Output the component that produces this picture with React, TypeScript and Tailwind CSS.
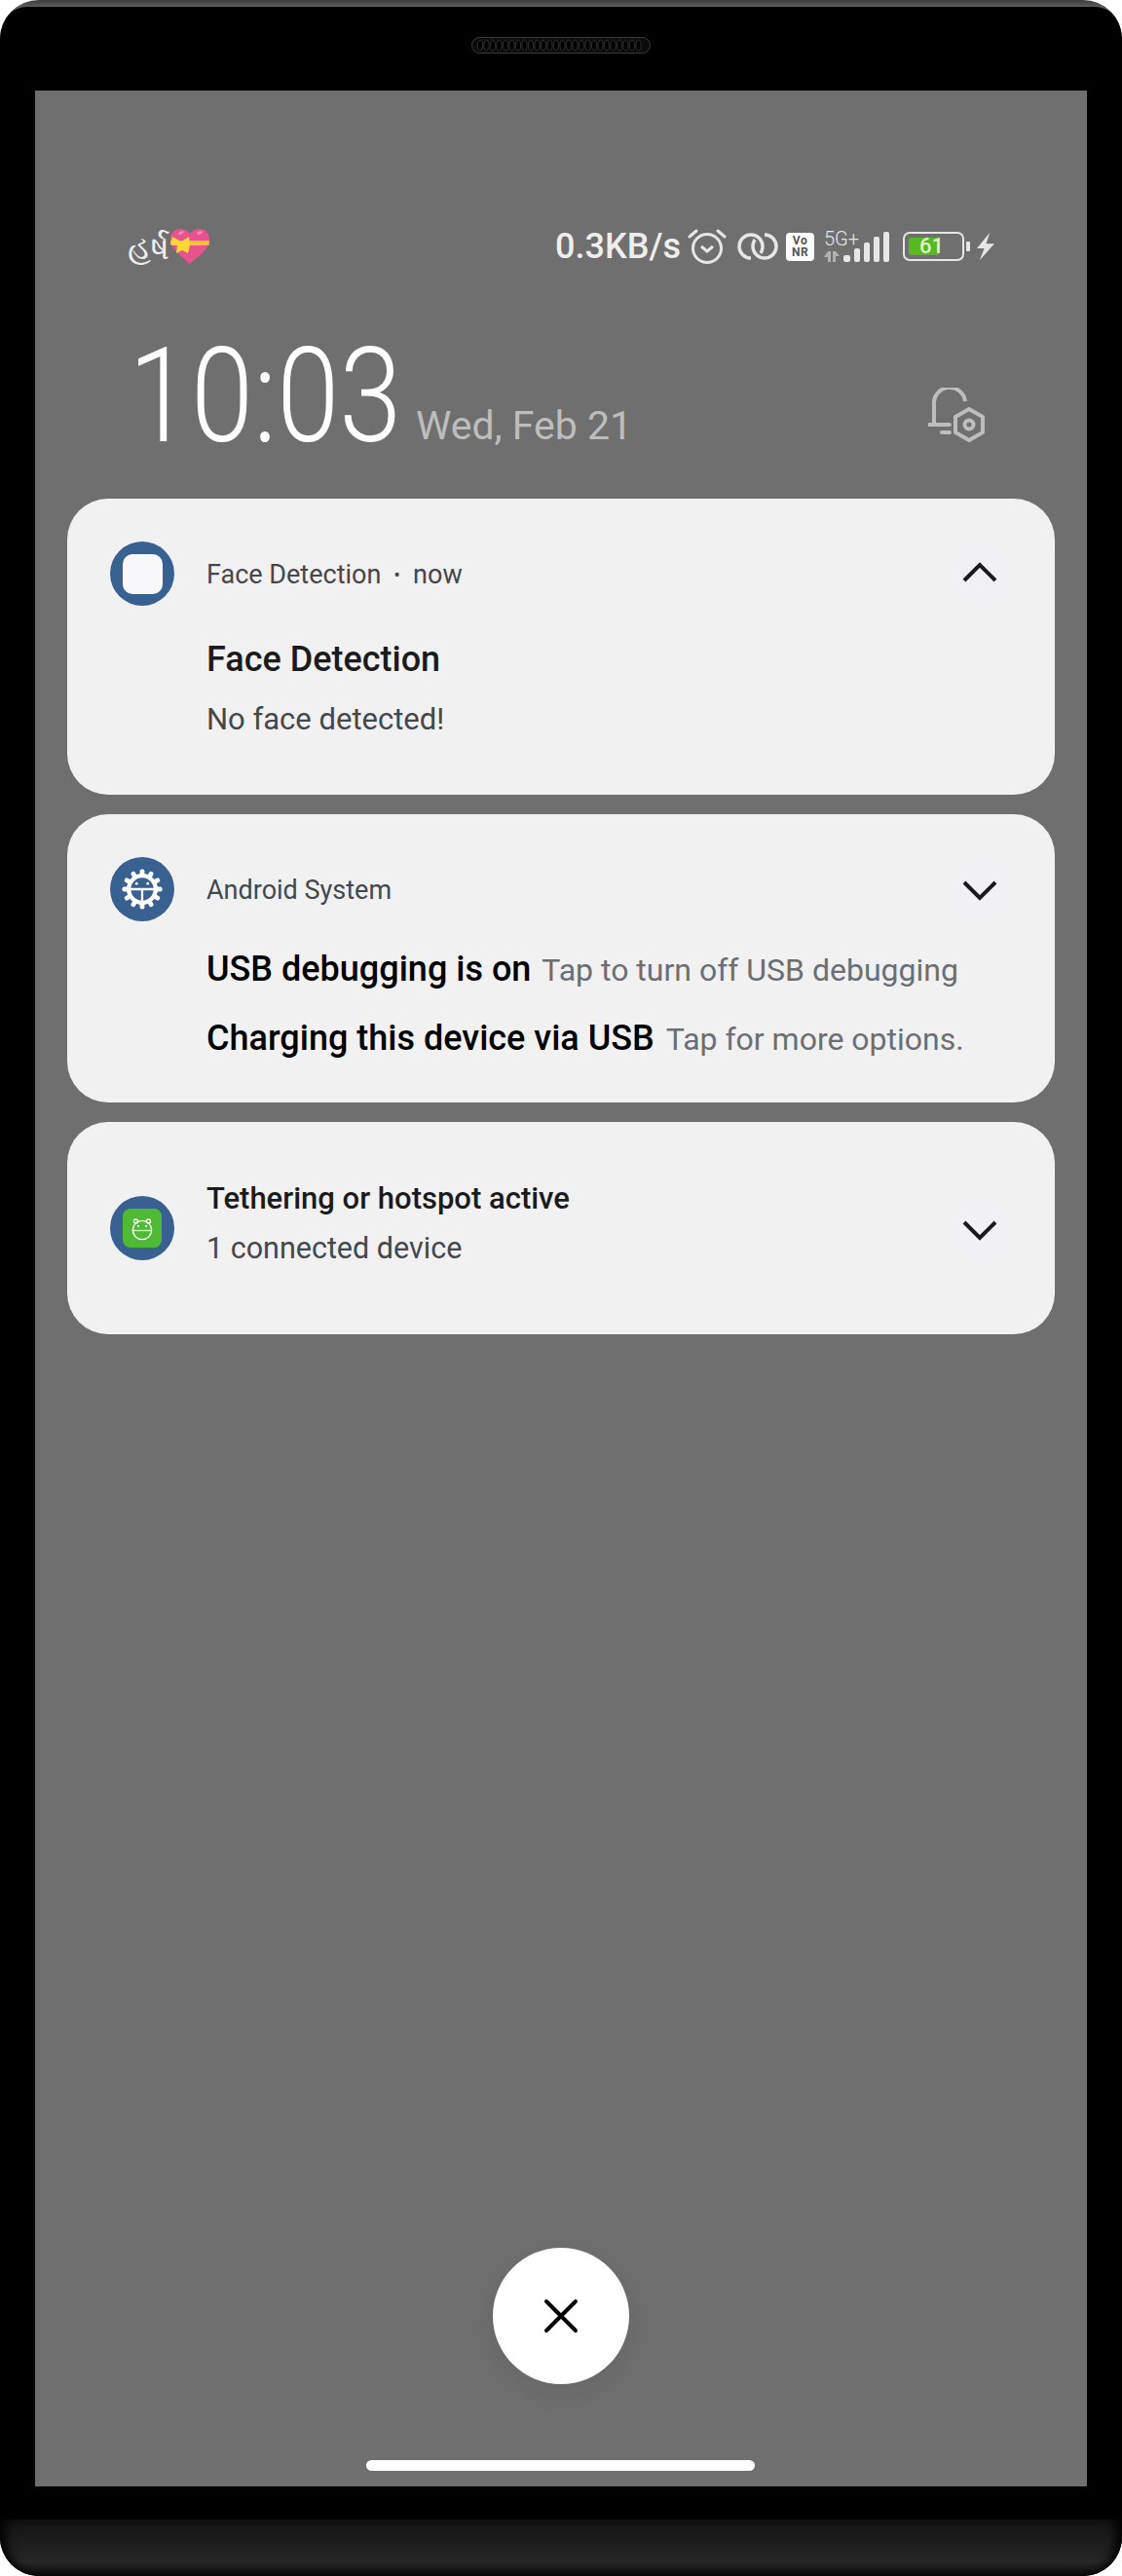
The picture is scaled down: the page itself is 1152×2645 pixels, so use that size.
const font = "font-['Roboto','Liberation_Sans',sans-serif]";

function Chevron({ up }: { up?: boolean }) {
  return (
    <div className="-my-[20px] flex h-[63px] w-[63px] shrink-0 items-center justify-center rounded-full bg-[#f0f0f5]">
      <svg width="40" height="24" viewBox="0 0 40 24" fill="none" stroke="#1b1b1d" strokeWidth="4">
        <path d={up ? "M4 19 L20 3 L36 19" : "M4 5 L20 21 L36 5"} />
      </svg>
    </div>
  );
}

function Speaker() {
  return (
    <svg width="184" height="17" viewBox="0 0 184 17">
      <rect x="0.5" y="0.5" width="183" height="16" rx="8" fill="#0c0c0c" stroke="#3c3c3c" />
      {Array.from({ length: 26 }).map((_, i) => (
        <ellipse key={i} cx={9 + i * 6.5} cy="8.5" rx="2.6" ry="5.5" fill="#000" stroke="#3a3a3a" strokeWidth="0.8" />
      ))}
    </svg>
  );
}

function AppIcon({ children }: { children: React.ReactNode }) {
  return (
    <div className="flex h-[66px] w-[66px] shrink-0 items-center justify-center rounded-full bg-[#386090]">{children}</div>
  );
}

function Gear() {
  const teeth = Array.from({ length: 12 }).map((_, i) => i * 30);
  return (
    <svg width="42" height="42" viewBox="0 0 44 44">
      {teeth.map((a) => (
        <rect key={a} x="19.5" y="0.5" width="5" height="8" rx="2" fill="#fff" transform={`rotate(${a} 22 22)`} />
      ))}
      <circle cx="22" cy="22" r="14.5" fill="#386090" stroke="#fff" strokeWidth="4.5" />
      <path d="M8 22 H36 M22 22 V36" stroke="#fff" strokeWidth="2.4" />
      <circle cx="16" cy="16" r="1.5" fill="#fff" />
      <circle cx="28" cy="16" r="1.5" fill="#fff" />
    </svg>
  );
}

function Robot() {
  return (
    <svg width="24" height="26" viewBox="0 0 24 26" fill="none" stroke="#fff" strokeWidth="1.3">
      <circle cx="12" cy="15" r="9.7" />
      <path d="M2.4 15.5 H21.6" />
      <circle cx="5.5" cy="6" r="2" />
      <circle cx="18.5" cy="6" r="2" />
      <circle cx="8" cy="11" r="1" fill="#fff" stroke="none" />
      <circle cx="16" cy="11" r="1" fill="#fff" stroke="none" />
    </svg>
  );
}

function Heart() {
  return (
    <svg width="42" height="38" viewBox="0 0 42 38">
      <path d="M21 37 C12 29 1 22 1 11 C1 5 6 1 11 1 C15 1 19 3 21 6 C23 3 27 1 31 1 C36 1 41 5 41 11 C41 22 30 29 21 37 Z" fill="#e8528f" />
      <path d="M1 13 H41 L40.5 18 H2 Z" fill="#fbc02d" />
      <path d="M12 14 L3 9 L1 17 L8 18 L7 26 L13 23 L19 26 L21 18 L20 9 Z" fill="#fdd835" />
      <ellipse cx="12" cy="5" rx="3" ry="1.5" fill="#f48fb1" transform="rotate(-30 12 5)" />
      <ellipse cx="31" cy="5" rx="3" ry="1.5" fill="#f48fb1" transform="rotate(-20 31 5)" />
    </svg>
  );
}

function StatusIcons() {
  return (
    <div className="flex items-center">
      <svg width="40" height="36" viewBox="0 0 40 36" fill="none" stroke="#e6e6e6" strokeWidth="3" className="ml-[7px]">
        <circle cx="20" cy="20" r="14.5" />
        <path d="M14 18 L20 23 L26 18" />
        <path d="M2 8 L9 2 M38 8 L31 2" strokeLinecap="round" />
      </svg>
      <svg width="42" height="30" viewBox="0 0 42 30" fill="none" stroke="#e6e6e6" strokeWidth="3.5" className="ml-[11px]">
        <path d="M14 27 A12 12 0 1 1 26 15 Q26 19 24 22" />
        <path d="M28 3 A12 12 0 1 1 16 15 Q16 11 18 8" />
      </svg>
      <div className="ml-[8px] flex h-[29px] w-[29px] flex-col items-center justify-center rounded-[4px] bg-white font-['Roboto',sans-serif] text-[12px] font-bold leading-[12px] tracking-[0.5px] text-[#555]">
        <span>Vo</span>
        <span>NR</span>
      </div>
      <div className="ml-[10px] flex h-[32px] w-[35px] flex-col justify-between">
        <span className="font-['Roboto',sans-serif] text-[20px] font-light leading-[17px] text-[#e6e6e6]">5G+</span>
        <svg width="16" height="11" viewBox="0 0 16 11" fill="#b0b0b0">
          <path d="M4 0 H7 V11 H4 V6 H0 Z M9 0 H12 L16 5 H12 V11 H9 Z" />
        </svg>
      </div>
      <svg width="47" height="31" viewBox="0 0 47 31" fill="#e6e6e6" className="-ml-[15px]">
        <rect x="0" y="24" width="7" height="7" rx="2" />
        <rect x="11" y="17" width="6" height="14" rx="2" />
        <rect x="21" y="11" width="6" height="20" rx="2" />
        <rect x="31" y="5" width="6" height="26" rx="2" />
        <rect x="41" y="0" width="6" height="31" rx="2" />
      </svg>
      <div className="relative ml-[14px] h-[30px] w-[63px] rounded-[7px] border-[2.5px] border-[#e6e6e6] p-[4px]">
        <div className="h-full w-[31px] rounded-[2px] bg-[#58b81f]" />
        <span className="absolute left-[15px] top-[-1px] font-['Roboto',sans-serif] text-[22px] font-medium leading-[28px] text-[#ddf5cc]">61</span>
      </div>
      <div className="ml-[2px] h-[10px] w-[4px] rounded-[1px] bg-[#e6e6e6]" />
      <svg width="19" height="30" viewBox="0 0 20 30" fill="#e6e6e6" className="ml-[7px]">
        <path d="M14 0 L0 17 H8 L3 30 L19 12 H10 Z" />
      </svg>
    </div>
  );
}

function BellHex() {
  return (
    <svg width="60" height="56" viewBox="0 0 60 56" fill="none" stroke="#bdbdbd" strokeWidth="4" className="mb-[5px]">
      <path d="M6 38 V18 A16 16 0 0 1 38 14" />
      <path d="M0 38 H22 M14 46 H22" strokeLinecap="round" />
      <path d="M42 22 L56 30 V46 L42 54 L28 46 V30 Z" strokeLinejoin="round" />
      <circle cx="42" cy="38" r="4.5" />
    </svg>
  );
}

export default function App() {
  return (
    <div className={`flex h-[2645px] w-[1152px] flex-col overflow-hidden rounded-[40px] bg-[linear-gradient(180deg,#3c3c3c_0,#5c5c5c_7px,#333_20px,#000_44px)] ${font}`}>
      <div className="mt-[7px] flex h-[86px] shrink-0 items-start justify-center rounded-t-[28px] bg-black pt-[31px]">
        <Speaker />
      </div>
      <div className="flex flex-1 flex-col bg-black">
        <div className="mx-[36px] flex h-[2460px] shrink-0 flex-col bg-[#6f6f6f] px-[33px]">
          <div className="mt-[136px] flex h-[48px] items-center justify-between pl-[62px] pr-[61px]">
            <div className="flex items-center">
              <span className="font-['Noto_Sans','DejaVu_Sans',sans-serif] text-[34px] leading-none text-[#eee]">હર્ષ</span>
              <Heart />
            </div>
            <div className="flex items-center">
              <span className="text-[36px] font-medium text-[#eee]">0.3KB/s</span>
              <StatusIcons />
            </div>
          </div>
          <div className="mt-[78px] flex h-[104px] items-end justify-between pl-[63px] pr-[70px]">
            <div className="flex items-end">
              <span className="inline-block w-[277px] origin-left scale-x-[0.855] whitespace-nowrap text-[135px] font-light leading-[104px] text-white">10:03</span>
              <span className="ml-[18px] text-[41px] leading-[44px] text-[#bdbdbd]">Wed, Feb 21</span>
            </div>
            <BellHex />
          </div>
          <div className="mt-[53px] flex flex-col gap-[20px]">
            <div className="h-[304px] rounded-[42px] bg-[#f1f1f2] pl-[44px] pr-[46px] pt-[44px]">
              <div className="flex items-center">
                <AppIcon><div className="h-[41px] w-[41px] rounded-[10px] bg-[#f8f8fa]" /></AppIcon>
                <span className="ml-[33px] mt-[2px] text-[27px] text-[#44474c]">Face Detection</span>
                <span className="mx-[13px] mt-[2px] text-[20px] text-[#44474c]">•</span>
                <span className="mt-[2px] text-[27px] text-[#44474c]">now</span>
                <div className="ml-auto"><Chevron up /></div>
              </div>
              <div className="ml-[99px] mt-[33px] text-[36px] font-medium leading-[44px] text-[#1b1b1d]">Face Detection</div>
              <div className="ml-[99px] mt-[22px] text-[31px] leading-[36px] text-[#44474c]">No face detected!</div>
            </div>
            <div className="h-[296px] rounded-[42px] bg-[#f1f1f2] pl-[44px] pr-[46px] pt-[44px]">
              <div className="flex items-center">
                <AppIcon><Gear /></AppIcon>
                <span className="ml-[33px] mt-[2px] text-[27px] text-[#44474c]">Android System</span>
                <div className="ml-auto"><Chevron /></div>
              </div>
              <div className="ml-[99px] mt-[26px] flex items-baseline">
                <span className="text-[36px] font-medium leading-[44px] text-black">USB debugging is on</span>
                <span className="ml-[11px] text-[32px] text-[#6b6e72]">Tap to turn off USB debugging</span>
              </div>
              <div className="ml-[99px] mt-[23px] flex items-baseline">
                <span className="text-[36px] font-medium leading-[44px] text-black">Charging this device via USB</span>
                <span className="ml-[12px] text-[32px] text-[#6b6e72]">Tap for more options.</span>
              </div>
            </div>
            <div className="flex h-[218px] items-start rounded-[42px] bg-[#f1f1f2] pl-[44px] pr-[46px] pt-[76px]">
              <AppIcon>
                <div className="flex h-[40px] w-[40px] items-center justify-center rounded-[8px] bg-[#4fbb35]"><Robot /></div>
              </AppIcon>
              <div className="-mt-[23px] ml-[33px]">
                <div className="text-[31px] font-medium leading-[51px] text-[#1b1b1d]">Tethering or hotspot active</div>
                <div className="text-[30.5px] leading-[51px] text-[#44474c]">1 connected device</div>
              </div>
              <div className="ml-auto mt-[22px]"><Chevron /></div>
            </div>
          </div>
          <div className="mt-auto flex flex-col items-center pb-[16px]">
            <div className="flex h-[140px] w-[140px] items-center justify-center rounded-full bg-white shadow-[0_8px_30px_rgba(0,0,0,0.08)]">
              <svg width="36" height="36" viewBox="0 0 36 36" stroke="#000" strokeWidth="4" strokeLinecap="round">
                <path d="M3 3 L33 33 M33 3 L3 33" />
              </svg>
            </div>
            <div className="-ml-[1px] mt-[78px] h-[11px] w-[399px] rounded-full bg-white" />
          </div>
        </div>
        <div className="mt-[34px] flex-1 rounded-b-[40px] bg-[linear-gradient(180deg,#121212,#272727_75%,#0a0a0a)] shadow-[inset_14px_0_12px_-8px_#000,inset_-14px_0_12px_-8px_#000]" />
      </div>
    </div>
  );
}
